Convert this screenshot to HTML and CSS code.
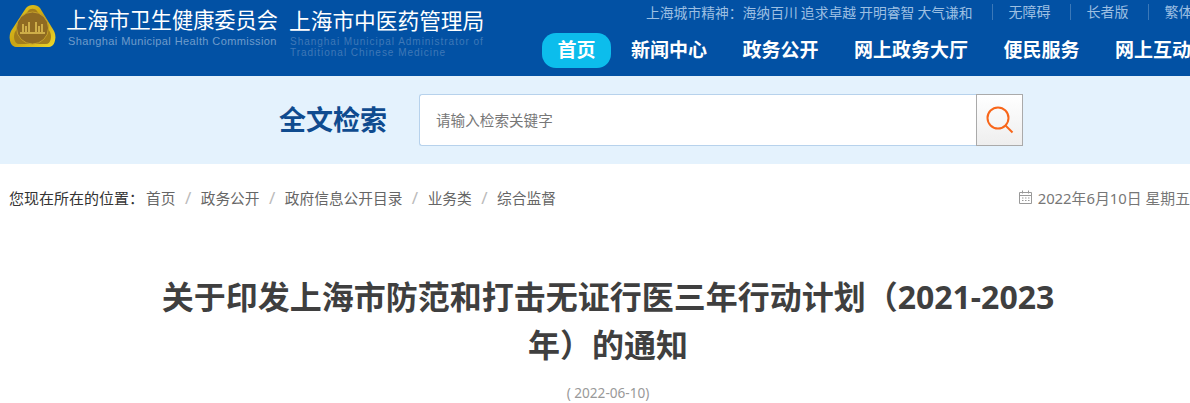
FILE: index.html
```html
<!DOCTYPE html>
<html lang="zh-CN">

<head>
  <meta charset="UTF-8">
  <meta name="viewport" content="width=device-width, initial-scale=1.0">
  <title>关于印发上海市防范和打击无证行医三年行动计划（2021-2023年）的通知</title>

  <link rel="stylesheet" href="styles.css">
</head>

<body>
  <header class="top">
    <div class="brand">
      <svg class="logo" width="47" height="42" viewBox="0 0 47 42">
        <defs>
          <linearGradient id="gold" x1="0" y1="0" x2="1" y2="1">
            <stop offset="0" stop-color="#e8d020" />
            <stop offset="0.5" stop-color="#c9a414" />
            <stop offset="1" stop-color="#efd92a" />
          </linearGradient>
        </defs>
        <path d="M17 3C20 -1 28 -1 31 3L45 26C48 32 46 42 40 42H7C1 42 -1 32 2 26Z" fill="url(#gold)" />
        <path d="M19 6C21 3 26 3 28 6L41 27C43 31 42 39 37 39H10C5 39 4 31 6 27Z" fill="#a37d1c" />
        <circle cx="23.500" cy="23" r="16" fill="#8f6a22" stroke="#c4a02a" />
        <path d="M11 28H36M14 27V19M20 27V17M27 27V17M33 27V19M17 27V21M30 27V21" stroke="#e3c455" stroke-width="1.500" fill="none" />
      </svg>
      <div class="org org-first">
        <div class="org-name">上海市卫生健康委员会</div>
        <div class="org-en">Shanghai Municipal Health Commission</div>
      </div>
      <div class="org org-second">
        <div class="org-name">上海市中医药管理局</div>
        <div class="org-en">Shanghai Municipal Administrator of<br>Traditional Chinese Medicine</div>
      </div>
    </div>
    <div class="top-right">
      <div class="top-links">
        <span class="motto">上海城市精神：海纳百川 追求卓越 开明睿智 大气谦和</span>
        <a>无障碍</a>
        <a>长者版</a>
        <a>繁体</a>
      </div>
      <nav class="nav">
        <a class="active">首页</a>
        <a>新闻中心</a>
        <a>政务公开</a>
        <a>网上政务大厅</a>
        <a>便民服务</a>
        <a>网上互动</a>
      </nav>
    </div>
  </header>

  <section class="search-band">
    <h2 class="search-title">全文检索</h2>
    <div class="search-box">
      <input class="search-input" type="text" placeholder="请输入检索关键字">
      <button class="search-btn">
        <svg width="30" height="30" viewBox="0 0 30 30">
          <circle cx="13" cy="13" r="10.500" fill="none" stroke="#f8661a" stroke-width="2" />
          <path d="M20.500 20.500L27.500 27.500" stroke="#f8661a" stroke-width="2" />
        </svg>
      </button>
    </div>
  </section>

  <div class="crumb-row">
    <div class="crumbs">
      <span class="crumb-label">您现在所在的位置：</span>
      <a>首页</a><i>/</i>
      <a>政务公开</a><i>/</i>
      <a>政府信息公开目录</a><i>/</i>
      <a>业务类</a><i>/</i>
      <a>综合监督</a>
    </div>
    <div class="today">
      <svg width="13" height="14" viewBox="0 0 13 14">
        <path d="M.5 2.500H12.500V13.500H.5ZM.5 5.500H12.500M3.500 .5V3.500M9.500 .5V3.500M3 8H4.500M6 8H7.500M9 8H10.500M3 10.500H4.500M6 10.500H7.500M9 10.500H10.500" fill="none" stroke="#999" />
      </svg>
      2022年6月10日 星期五
    </div>
  </div>

  <main class="article">
    <h1 class="article-title">关于印发上海市防范和打击无证行医三年行动计划（2021-2023年）的通知</h1>
    <p class="article-date">( 2022-06-10)</p>
  </main>
</body>

</html>
```

FILE: styles.css
```css
* {
  margin: 0;
  padding: 0;
  box-sizing: border-box;
}

body {
  width: 1190px;
  height: 403px;
  overflow: hidden;
  background: #fff;
  font-family: "Noto Sans", "Noto Sans CJK SC", sans-serif;
}

.top {
  display: flex;
  width: 1190px;
  height: 76px;
  padding-left: 9px;
  overflow: hidden;
  background: #0251a4;
}

.brand {
  display: flex;
  flex: 0 0 533px;
  padding-top: 5px;
}

.logo {
  flex: 0 0 47px;
}

.org {
  color: #fff;
}

.org-first {
  width: 212px;
  margin-left: 10px;
}

.org-second {
  width: 196px;
  margin-left: 11px;
  margin-top: 1px;
}

.org-name {
  font-size: 21.200px;
  line-height: 30px;
  white-space: nowrap;
}

.org-second .org-name {
  font-size: 21.700px;
}

.org-en {
  margin-left: 2px;
  font-family: "Liberation Sans", sans-serif;
  font-size: 11px;
  line-height: 12px;
  letter-spacing: 0.4px;
  color: #6f9ccb;
  white-space: nowrap;
}

.org-second .org-en {
  margin-left: 1px;
  line-height: 11px;
  letter-spacing: 0.98px;
  font-size: 10px;
  color: #3f78b7;
}

.top-right {
  flex: 0 0 auto;
}

.top-links {
  display: flex;
  align-items: center;
  height: 24px;
  padding-left: 104px;
  font-size: 14px;
  color: #9cbfe2;
  white-space: nowrap;
}

.motto {
  font-size: 13.800px;
  word-spacing: -0.5px;
}

.top-links a {
  margin-left: 19px;
  padding-left: 16px;
  border-left: 1px solid #3b78b8;
  line-height: 16px;
}

.nav {
  display: flex;
  gap: 4.500px;
  margin-top: 9px;
}

.nav a {
  padding: 0 15.500px;
  height: 35px;
  line-height: 35px;
  border-radius: 14px;
  font-size: 19px;
  font-weight: 700;
  color: #fff;
  white-space: nowrap;
}

.nav a.active {
  background: #0cbdec;
}

.search-band {
  display: flex;
  align-items: center;
  height: 88px;
  padding-left: 279px;
  background: #e4f2fd;
}

.search-title {
  width: 140px;
  font-size: 27px;
  line-height: 36px;
  color: #0f4b8f;
}

.search-box {
  display: flex;
  height: 52px;
}

.search-input {
  width: 557px;
  height: 52px;
  padding-left: 16px;
  border: 1px solid #b7d2ec;
  border-right: 0;
  border-radius: 3px 0 0 3px;
  outline: none;
  background: #fff;
  font-family: inherit;
  font-size: 14.600px;
}

.search-input::placeholder {
  color: #777;
  opacity: 1;
}

.search-btn {
  display: flex;
  justify-content: center;
  align-items: center;
  width: 47px;
  height: 52px;
  border: 1px solid #aaa;
  background: linear-gradient(#fff, #eee);
}

.crumb-row {
  display: flex;
  justify-content: space-between;
  align-items: center;
  height: 66px;
  padding-left: 9px;
  font-size: 14.700px;
  color: #777;
}

.crumbs {
  display: flex;
  align-items: center;
}

.crumbs a {
  color: #666;
}

.crumbs i {
  margin: 0 9.500px;
  font-size: 17px;
  font-style: normal;
  color: #bbb;
}

.crumb-label {
  margin-right: 2px;
  font-size: 15px;
  color: #333;
}

.today {
  display: flex;
  align-items: center;
  gap: 6px;
  font-size: 14.850px;
  white-space: nowrap;
}

.article {
  width: 1198px;
  margin-left: 9px;
  padding-top: 43px;
  text-align: center;
}

.article-title {
  width: 900px;
  margin: 0 auto;
  font-size: 32px;
  line-height: 48px;
  font-weight: 700;
  color: #3f3f3f;
}

.article-date {
  margin-top: 14px;
  font-size: 13.600px;
  line-height: 20px;
  color: #999;
}
```
